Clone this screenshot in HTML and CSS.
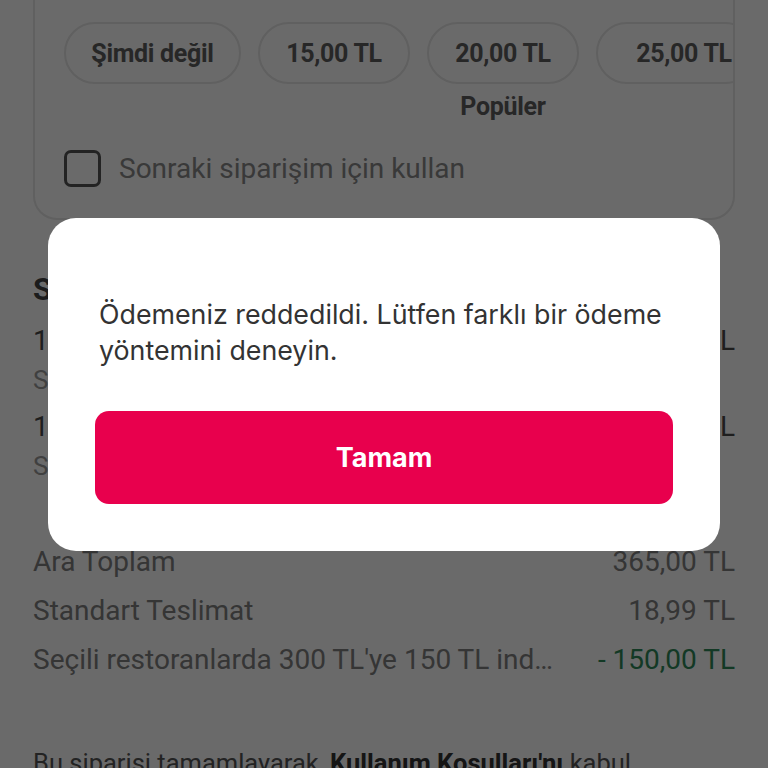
FILE: index.html
```html
<!DOCTYPE html>
<html lang="tr">
<head>
    <meta charset="UTF-8">
    <meta name="viewport" content="width=device-width, initial-scale=1.0">
    <title>Ödeme</title>
    <link rel="stylesheet" href="styles.css">
</head>
<body>
    <div class="page">
        <div class="tip-card">
            <div class="chips">
                <div class="chip-col">
                    <div class="chip chip-wide">Şimdi değil</div>
                </div>
                <div class="chip-col">
                    <div class="chip">15,00 TL</div>
                </div>
                <div class="chip-col">
                    <div class="chip">20,00 TL</div>
                    <div class="chip-note">Popüler</div>
                </div>
                <div class="chip-col">
                    <div class="chip chip-last">25,00 TL</div>
                </div>
            </div>
            <label class="check-row">
                <span class="checkbox"></span>
                <span class="check-label">Sonraki siparişim için kullan</span>
            </label>
        </div>

        <div class="summary">
            <h2>Sipariş özeti</h2>
            <div class="item">
                <div class="line"><span>1x Tavuk Dürüm Menü</span><span>185,00 TL</span></div>
                <div class="item-sub">Seçim: Ayran</div>
            </div>
            <div class="item">
                <div class="line"><span>1x Karışık Pizza</span><span>180,00 TL</span></div>
                <div class="item-sub">Seçim: Orta boy</div>
            </div>

            <div class="totals">
                <div class="line"><span>Ara Toplam</span><span>365,00 TL</span></div>
                <div class="line"><span>Standart Teslimat</span><span>18,99 TL</span></div>
                <div class="line"><span class="ellipsis">Seçili restoranlarda 300 TL'ye 150 TL indirim</span><span class="discount">- 150,00 TL</span></div>
            </div>

            <p class="terms">Bu siparisi tamamlayarak, <b>Kullanım Koşulları'nı</b> kabul ediyorsunuz.</p>
        </div>
    </div>

    <!-- Dialog over the checkout page -->
    <div class="overlay">
        <div class="dialog">
            <p class="dialog-text">Ödemeniz reddedildi. Lütfen farklı bir ödeme yöntemini deneyin.</p>
            <button class="dialog-button">Tamam</button>
        </div>
    </div>
</body>
</html>
```

FILE: styles.css
```css
body {
    margin: 0;
    background-color: #fff;
    font-family: "Roboto", sans-serif;
    color: #555;
}

.page {
    height: 768px;
    overflow: hidden;
    padding: 0 33px;
}

/* tip card, top of it is scrolled away */
.tip-card {
    height: 220px;
    box-sizing: border-box;
    border: 2px solid #e6e6e6;
    border-top: none;
    border-radius: 0 0 24px 24px;
    padding-top: 22px;
}

.chips {
    display: flex;
    gap: 17px;
    padding-left: 29px;
    overflow: hidden;
}

.chip-col {
    display: flex;
    flex-direction: column;
    align-items: center;
    flex-shrink: 0;
}

.chip {
    height: 62px;
    box-sizing: border-box;
    border: 2px solid #e6e6e6;
    border-radius: 31px;
    padding: 0 20px;
    display: flex;
    align-items: center;
    justify-content: center;
    font-weight: bold;
    font-size: 25px;
    letter-spacing: -0.3px;
    color: #5e5e5e;
    width: 152px;
}

.chip-wide {
    width: 177px;
}

.chip-last {
    width: 160px;
    padding-left: 36px;
}

.chip-note {
    margin-top: 9px;
    line-height: 28px;
    font-size: 25px;
    font-weight: bold;
    letter-spacing: -0.3px;
    color: #5e5e5e;
}

.check-row {
    display: flex;
    align-items: center;
    gap: 18px;
    margin-top: 29px;
    padding-left: 29px;
}

.checkbox {
    width: 37px;
    height: 37px;
    box-sizing: border-box;
    border: 3px solid #555;
    border-radius: 7px;
}

.check-label {
    font-size: 28px;
    color: #8a8a8a;
}

.summary h2 {
    margin: 52px 0 0;
    font-size: 31px;
    line-height: 36px;
    color: #444;
}

.line {
    display: flex;
    justify-content: space-between;
    gap: 40px;
    font-size: 28px;
    line-height: 36px;
    color: #808080;
}

.item {
    margin-top: 15px;
}

.item + .item {
    margin-top: 11px;
}

.item .line {
    color: #4a4a4a;
}

.item-sub {
    margin-top: 3px;
    font-size: 26px;
    line-height: 36px;
    color: #9a9a9a;
}

.totals {
    margin-top: 60px;
    display: flex;
    flex-direction: column;
    gap: 13px;
}

.ellipsis {
    white-space: nowrap;
    overflow: hidden;
    text-overflow: ellipsis;
}

.discount {
    white-space: nowrap;
    flex-shrink: 0;
    color: #2f8a5a;
}

.terms {
    margin: 67px 0 0;
    font-size: 25.5px;
    line-height: 36px;
    color: #555;
}

.terms b {
    color: #333;
}

/* dialog */
.overlay {
    position: fixed;
    inset: 0;
    background-color: rgba(0, 0, 0, 0.585);
    display: flex;
    align-items: center;
    justify-content: center;
}

.dialog {
    width: 672px;
    box-sizing: border-box;
    background-color: #fff;
    border-radius: 28px;
    padding: 78px 47px 47px;
}

.dialog-text {
    margin: 0;
    padding: 0 4px;
    font-family: "Inter", "Noto Sans", sans-serif;
    font-size: 26.8px;
    line-height: 36px;
    color: #333;
}

.dialog-button {
    display: block;
    width: 100%;
    height: 93px;
    margin-top: 43px;
    border: none;
    border-radius: 14px;
    background-color: #e8004d;
    color: #fff;
    font-family: "Inter", "Noto Sans", sans-serif;
    font-size: 27px;
    font-weight: bold;
    cursor: pointer;
}
```
